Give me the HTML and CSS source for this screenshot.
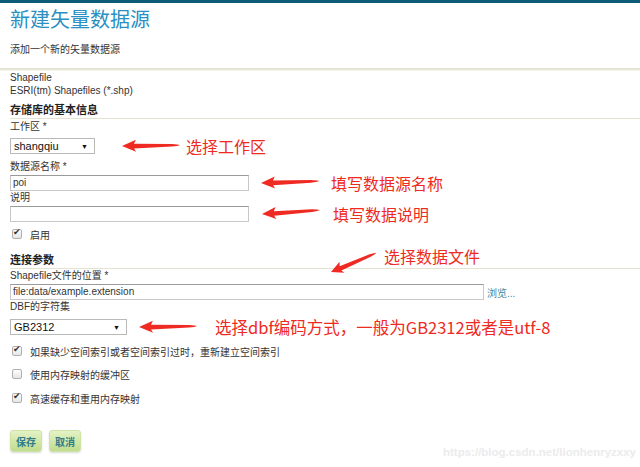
FILE: index.html
```html
<!DOCTYPE html>
<html lang="zh-CN">
<head>
    <meta charset="UTF-8">
    <title>新建矢量数据源</title>
    <link rel="stylesheet" href="styles.css">
</head>
<body>
    <div class="topbar"></div>

    <div class="page">
        <h1 class="title">新建矢量数据源</h1>
        <p class="subtitle">添加一个新的矢量数据源</p>
    </div>
    <div class="separator"></div>

    <div class="page">
        <div class="line">Shapefile</div>
        <div class="line">ESRI(tm) Shapefiles (*.shp)</div>

        <!-- 基本信息 -->
        <h3 class="section">存储库的基本信息</h3>
        <label class="field-label">工作区 *</label>
        <div class="select select-ws"><span>shangqiu</span><span class="caret">▼</span></div>

        <label class="field-label spaced">数据源名称 *</label>
        <div class="input input-short">poi</div>
        <label class="field-label">说明</label>
        <div class="input input-short"></div>

        <div class="check-row first"><span class="check on"></span>启用</div>

        <!-- 连接参数 -->
        <h3 class="section second">连接参数</h3>
        <label class="field-label">Shapefile文件的位置 *</label>
        <div class="file-row">
            <div class="input input-long">file:data/example.extension</div>
            <a class="browse">浏览...</a>
        </div>
        <label class="field-label">DBF的字符集</label>
        <div class="select select-cs"><span>GB2312</span><span class="caret">▼</span></div>

        <div class="check-row">
            <span class="check on"></span>如果缺少空间索引或者空间索引过时，重新建立空间索引
        </div>
        <div class="check-row"><span class="check"></span>使用内存映射的缓冲区</div>
        <div class="check-row last"><span class="check on"></span>高速缓存和重用内存映射</div>

        <div class="buttons">
            <button class="btn">保存</button>
            <button class="btn">取消</button>
        </div>
    </div>

    <!-- annotations drawn over the form -->
    <svg class="arrows" width="640" height="467" viewBox="0 0 640 467">
        <defs>
            <path id="arrow" d="M0 0 L14 -6 L12 -2 L50 -1.2 Q56 -0.8 58 0 Q56 1 50 1.4 L12 2.6 L14 6 Z"/>
        </defs>
        <use href="#arrow" fill="#ee2a22" transform="translate(122,146) rotate(-1)"/>
        <use href="#arrow" fill="#ee2a22" transform="translate(261,183) rotate(-2)"/>
        <use href="#arrow" fill="#ee2a22" transform="translate(262,214) rotate(-4)"/>
        <use href="#arrow" fill="#ee2a22" transform="translate(331,272) rotate(-23) scale(0.85,1)"/>
        <use href="#arrow" fill="#ee2a22" transform="translate(139,327) rotate(-1)"/>
    </svg>
    <span class="note n1">选择工作区</span>
    <span class="note n2">填写数据源名称</span>
    <span class="note n3">填写数据说明</span>
    <span class="note n4">选择数据文件</span>
    <span class="note n5">选择dbf编码方式，一般为GB2312或者是utf-8</span>

    <span class="watermark">https://blog.csdn.net/lionhenryzxxy</span>
</body>
</html>
```

FILE: styles.css
```css
* {
    margin: 0;
    padding: 0;
    box-sizing: border-box;
}

body {
    font-family: 'Liberation Sans', 'Noto Sans CJK SC', sans-serif;
    font-size: 10px;
    color: #333;
    background: #fff;
    width: 640px;
    height: 467px;
    overflow: hidden;
    position: relative;
}

.topbar {
    height: 3px;
    background: #0d5b78;
}

.page {
    padding-left: 10px;
}

.title {
    margin-top: 5px;
    font-size: 20px;
    line-height: 24px;
    font-weight: normal;
    color: #2a8fc2;
}

.subtitle {
    margin-top: 11px;
    line-height: 14px;
}

.separator {
    margin-top: 11px;
    height: 3px;
    background: #e5e5d3;
    border-bottom: 1px solid #f6f6ea;
}

.line {
    line-height: 13px;
}

.section {
    margin-top: 6px;
    margin-bottom: 1px;
    font-size: 11px;
    line-height: 15px;
    color: #222;
    border-bottom: 1px solid #e3e3cf;
}

.section.second {
    margin-top: 12px;
    margin-bottom: 0;
}

.field-label {
    display: block;
    line-height: 14px;
}

.field-label.spaced {
    margin-top: 6px;
}

.select {
    display: flex;
    justify-content: space-between;
    align-items: center;
    height: 16px;
    margin-top: 4px;
    padding: 0 6px 0 3px;
    border: 1px solid #b9b9b9;
    background: #fff;
    font-size: 11px;
    color: #111;
}

.select-ws {
    width: 85px;
}

.select-cs {
    width: 117px;
    margin-top: 5px;
}

.caret {
    font-size: 7px;
}

.input {
    height: 16px;
    margin-top: 1px;
    padding-left: 2px;
    border: 1px solid #c8c8c8;
    border-top-color: #9a9a9a;
    line-height: 14px;
    color: #333;
    background: #fff;
}

.input-short {
    width: 239px;
}

.file-row {
    display: flex;
    align-items: center;
    margin-top: 1px;
}

.input-long {
    width: 474px;
    margin-top: 0;
}

.browse {
    margin-left: 3px;
    color: #3d8aa6;
}

.check-row {
    display: flex;
    align-items: center;
    height: 14px;
    margin-top: 9px;
    padding-left: 2px;
}

.check-row.first {
    margin-top: 5px;
}

.check-row.last {
    margin-top: 10px;
}

.check {
    width: 10px;
    height: 10px;
    margin-right: 8px;
    border: 1px solid #b0b0b0;
    border-radius: 2px;
    background: linear-gradient(#fdfdfd, #e6e6e6);
    position: relative;
}

.check.on::after {
    content: '✔';
    position: absolute;
    left: 0;
    top: -3px;
    font-size: 9px;
    color: #333;
}

.buttons {
    display: flex;
    gap: 7px;
    margin-top: 25px;
}

.btn {
    width: 32px;
    height: 22px;
    border: 1px solid #cfe3a8;
    border-radius: 3px;
    background: linear-gradient(#e4f2c4, #bfdc8e);
    box-shadow: 0 1px 2px rgba(0, 0, 0, 0.15);
    font-family: 'Noto Sans CJK SC', sans-serif;
    font-size: 10px;
    font-weight: bold;
    color: #2d7d8c;
}

.arrows {
    position: absolute;
    left: 0;
    top: 0;
}

.note {
    position: absolute;
    font-family: 'Noto Sans CJK SC', 'Liberation Sans', sans-serif;
    font-size: 16px;
    line-height: 20px;
    color: #ee2a22;
    white-space: nowrap;
}

.n1 { left: 186px; top: 136px; }
.n2 { left: 331px; top: 173px; }
.n3 { left: 333px; top: 204px; }
.n4 { left: 384px; top: 246px; }
.n5 { left: 215px; top: 317px; font-size: 16.5px; }

.watermark {
    position: absolute;
    left: 443px;
    top: 446px;
    font-size: 11.5px;
    font-weight: bold;
    color: #ececec;
    text-shadow: 0 0 1px #fafafa;
}
```
